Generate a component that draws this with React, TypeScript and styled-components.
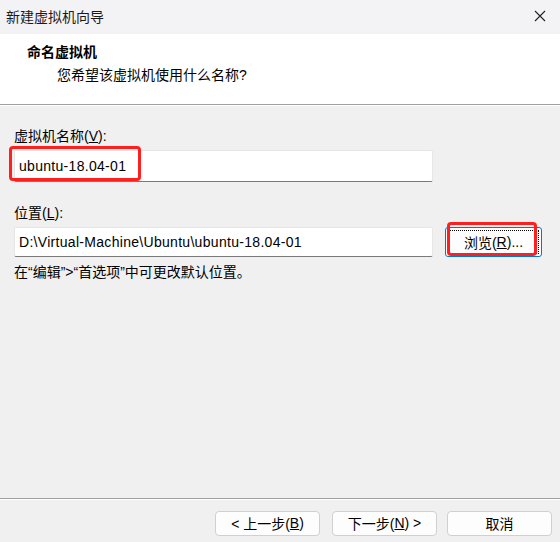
import React from 'react';
import styled, { createGlobalStyle } from 'styled-components';

const GlobalStyle = createGlobalStyle`
  html, body {
    margin: 0;
    padding: 0;
    background: #f0f0f0;
  }
  body {
    font-family: "Liberation Sans", "Noto Sans CJK SC", sans-serif;
    font-size: 14px;
    color: #000;
  }
`;

const App = () => {
  return (
    <Window>
      <GlobalStyle />
      <TitleBar>
        <span>新建虚拟机向导</span>
        <CloseIcon width="12" height="12" viewBox="0 0 12 12">
          <path d="M1 1 L11 11 M11 1 L1 11" stroke="#222" strokeWidth="1.1" fill="none" />
        </CloseIcon>
      </TitleBar>

      <Header>
        <h3>命名虚拟机</h3>
        <p>您希望该虚拟机使用什么名称?</p>
      </Header>

      <Body>
        <Label>虚拟机名称(<u>V</u>):</Label>
        <FieldWrap>
          <TextField height={32}>ubuntu-18.04-01</TextField>
          <Mark style={{ left: -5, top: -4, width: 132, height: 35 }} />
        </FieldWrap>

        <Label gap={21}>位置(<u>L</u>):</Label>
        <PathRow>
          <TextField height={30}>D:\Virtual-Machine\Ubuntu\ubuntu-18.04-01</TextField>
          <BrowseButton>
            <span>浏览(<u>R</u>)...</span>
            <Mark style={{ left: 1, top: -6, width: 90, height: 34 }} />
          </BrowseButton>
        </PathRow>
        <Note>在“编辑”&gt;“首选项”中可更改默认位置。</Note>
      </Body>

      <Footer>
        <Button>&lt; 上一步(<u>B</u>)</Button>
        <Button>下一步(<u>N</u>) &gt;</Button>
        <Button>取消</Button>
      </Footer>
    </Window>
  );
};

const Window = styled.div`
  width: 560px;
  height: 542px;
  display: flex;
  flex-direction: column;
  background: #f0f0f0;
  overflow: hidden;
`;

const TitleBar = styled.div`
  height: 34px;
  flex-shrink: 0;
  display: flex;
  align-items: center;
  justify-content: space-between;
  padding: 0 14px 0 6px;
  background: #f3f2f5;
  color: #1a1a1a;
  font-size: 14px;
  span {
    margin-top: -3px;
  }
`;

const CloseIcon = styled.svg`
  margin-top: -3px;
`;

const Header = styled.div`
  height: 71px;
  flex-shrink: 0;
  background: #fff;
  border-bottom: 1px solid #a0a0a0;
  box-shadow: 0 1px 0 #fff;
  padding: 8px 0 0 27px;
  box-sizing: border-box;

  h3 {
    margin: 0;
    font-size: 14px;
    font-weight: 700;
    line-height: 20px;
  }
  p {
    margin: 3px 0 0 30px;
    font-size: 14px;
    line-height: 20px;
  }
`;

const Body = styled.div`
  flex: 1;
  display: flex;
  flex-direction: column;
  padding: 21px 18px 0 14px;
  border-bottom: 1px solid #a0a0a0;
`;

const Label = styled.div<{ gap?: number }>`
  line-height: 20px;
  margin-top: ${(p) => p.gap ?? 0}px;
  margin-bottom: 4px;
  color: #000;
`;

const FieldWrap = styled.div`
  position: relative;
  width: 419px;
`;

const TextField = styled.div<{ height: number }>`
  box-sizing: border-box;
  width: 419px;
  height: ${(p) => p.height}px;
  display: flex;
  align-items: center;
  padding: 0 5px 1px 4px;
  background: #fff;
  border: 1px solid #e6e6e6;
  border-bottom: 1px solid #7a7a7a;
  border-radius: 2px;
  letter-spacing: 0.3px;
  white-space: nowrap;
  overflow: hidden;
`;

const Mark = styled.div`
  position: absolute;
  box-sizing: border-box;
  border: 3px solid #ff1f1f;
  border-radius: 4px;
  pointer-events: none;
`;

const PathRow = styled.div`
  display: flex;
  gap: 12px;
  align-items: flex-start;
`;

const BrowseButton = styled.div`
  position: relative;
  box-sizing: border-box;
  width: 97px;
  height: 30px;
  border: 1px solid #0078d4;
  border-radius: 3px;
  background: #fdfdfd;
  display: flex;
  align-items: center;
  justify-content: center;
  padding: 2px;

  span {
    flex: 1;
    align-self: stretch;
    display: flex;
    align-items: center;
    justify-content: center;
    border: 1px dotted #000;
    padding-bottom: 1px;
  }
`;

const Note = styled.div`
  margin-top: 5px;
  line-height: 20px;
`;

const Footer = styled.div`
  height: 43px;
  flex-shrink: 0;
  display: flex;
  justify-content: flex-end;
  align-items: flex-start;
  gap: 10px;
  padding: 11px 8px 0 0;
  box-sizing: border-box;
  border-top: 1px solid #fff;
`;

const Button = styled.div`
  box-sizing: border-box;
  width: 105px;
  height: 25px;
  display: flex;
  align-items: center;
  justify-content: center;
  background: #fdfdfd;
  border: 1px solid #d0d0d0;
  border-radius: 4px;
  font-size: 14px;
  padding-bottom: 1px;

  &:first-child {
    margin-right: 2px;
  }
`;

export default App;
